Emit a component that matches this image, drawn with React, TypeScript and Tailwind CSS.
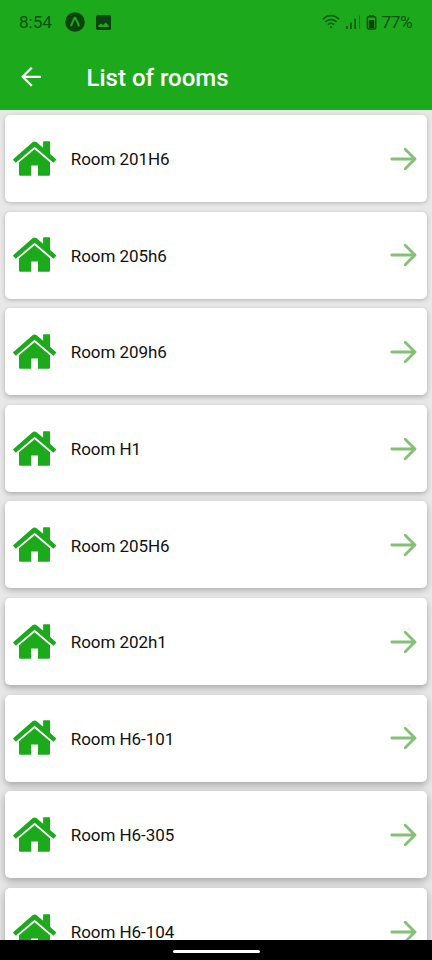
const rooms = ['201H6', '205h6', '209h6', 'H1', '205H6', '202h1', 'H6-101', 'H6-305', 'H6-104'];

const shadows = [
  'shadow-[0_1px_4px_rgba(0,0,0,0.22)]',
  'shadow-[0_1px_4px_rgba(0,0,0,0.24)]',
  'shadow-[0_2px_5px_rgba(0,0,0,0.25)]',
  'shadow-[0_2px_5px_rgba(0,0,0,0.26)]',
  'shadow-[0_2px_6px_rgba(0,0,0,0.27)]',
  'shadow-[0_3px_6px_rgba(0,0,0,0.28)]',
  'shadow-[0_3px_7px_rgba(0,0,0,0.29)]',
  'shadow-[0_3px_8px_rgba(0,0,0,0.30)]',
  'shadow-[0_3px_8px_rgba(0,0,0,0.30)]',
];

function House() {
  return (
    <svg className="ml-[7.2px] mt-[0.5px] h-9 w-[45px] shrink-0" viewBox="-0.7 0 45 36" fill="#1caa1c">
      <path d="M30.4.9Q30.4.2 31.1.2H36.7Q37.4.2 37.4.9V13L43.2 18Q43.7 18.5 43.3 19L41.2 21.2Q40.7 21.7 40.1 21.2L21.9 5.8 3.7 21.2Q3.1 21.7 2.6 21.2L.6 19Q.2 18.5.7 18L19.8 1.2Q21.9-.4 24 1.2L30.4 6.7Z" />
      <path d="M21.9 8.3 37.3 21.2V33.6Q37.3 34.8 36.1 34.8H25.3V24.4H18.5V34.8H7.5Q6.3 34.8 6.3 33.6V21.2Z" />
    </svg>
  );
}

function StatusBar() {
  return (
    <div className="flex h-11 items-center pl-[19px] pr-[18px] text-[#0b520f]">
      <span className="w-[46px] pt-[2px] text-[17.3px] leading-none tracking-[-0.1px]">8:54</span>
      <svg className="h-5 w-5" viewBox="0 0 20 20">
        <circle cx="10" cy="10" r="9.8" fill="#0b430e" />
        <path d="M6.1 13.5 9.3 6.3Q10 5.3 10.7 6.3L13.9 13.5" fill="none" stroke="#1caa1c" strokeWidth="1.9" strokeLinecap="round" />
      </svg>
      <svg className="ml-[11px] h-[15px] w-[15px]" viewBox="0 0 15 15">
        <rect width="15" height="15" rx="1.8" fill="#0b430e" />
        <path d="M2.2 12V10.5L5 8.5 7 10 9.8 7.4 12.8 10.5V12Z" fill="#1caa1c" />
      </svg>
      <svg className="ml-auto h-4 w-[18px]" viewBox="0 0 18 16" fill="none" stroke="currentColor" strokeWidth="1.5">
        <path d="M.8 5.2Q9-2.2 17.2 5.2M3.3 8Q9 3 14.7 8M5.9 10.6Q9 8 12.1 10.6" />
        <circle cx="9" cy="13.2" r=".9" fill="currentColor" stroke="none" />
      </svg>
      <svg className="ml-1.5 h-[15px] w-[15px]" viewBox="0 0 15 15" fill="currentColor">
        <path d="M.2 11h1.5V14H.2zM4.2 7.6h1.5V14H4.2zM8.4 3.8H9.9V14H8.4z" />
        <path d="M13 .6h1.1V14H13z" opacity=".5" />
      </svg>
      <svg className="ml-[5px] h-[15px] w-[11px]" viewBox="0 0 11 15">
        <path d="M3.5 1.3V.6h4v.7" fill="none" stroke="currentColor" strokeWidth="1.2" />
        <rect x="1.3" y="1.7" width="8.4" height="12.4" rx="1.3" fill="none" stroke="currentColor" strokeWidth="1.5" />
        <rect x="2.8" y="5" width="5.4" height="8" fill="#0b430e" />
      </svg>
      <span className="ml-[4.5px] w-[32.5px] whitespace-nowrap pt-[2px] text-[17.3px] leading-none tracking-[-0.5px]">77%</span>
    </div>
  );
}

export default function App() {
  return (
    <div className="flex h-[960px] w-[432px] flex-col overflow-hidden bg-[#e8e8e8] font-['Roboto',sans-serif]">
      <header className="h-[110px] shrink-0 bg-[#1caa1c]">
        <StatusBar />
        <div className="flex h-[66px] items-center pl-[21px] text-white">
          <svg className="h-5 w-5" viewBox="0 0 20 20" fill="none" stroke="currentColor" strokeWidth="2.2">
            <path d="M20 9.8H2M10.8.7 1.7 9.8 10.8 18.9" />
          </svg>
          <h1 className="ml-[45.5px] pt-[1.8px] text-[24px] font-medium leading-none">List of rooms</h1>
        </div>
      </header>
      <main className="flex min-h-0 flex-1 flex-col gap-[9.6px] overflow-hidden px-[4.8px] pt-[5.1px]">
        {rooms.map((room, i) => (
          <div key={room} className={`flex h-[87px] shrink-0 items-center rounded-[5px] bg-white ${shadows[i]}`}>
            <House />
            <span className="ml-[13.8px] pt-[2.4px] text-[17px] leading-none tracking-[-0.05px] text-[#111]">Room {room}</span>
            <svg className="ml-auto mr-[10px] mt-[0.5px] h-6 w-[27px]" viewBox="0 0 27 24" fill="none" stroke="#83c176" strokeWidth="2.8" strokeLinecap="round" strokeLinejoin="round">
              <path d="M1.8 12H25M15.2 2.2 25 12 15.2 21.8" />
            </svg>
          </div>
        ))}
      </main>
      <footer className="flex h-[19.6px] shrink-0 items-center justify-center bg-black pt-[3px]">
        <div className="h-[2.5px] w-[87px] rounded-full bg-white" />
      </footer>
    </div>
  );
}
